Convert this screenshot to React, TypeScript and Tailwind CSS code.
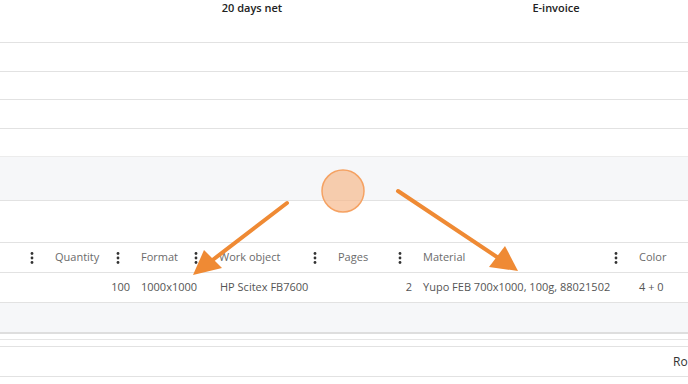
import React from "react";

const Kebab = () => (
  <svg width="4" height="14" viewBox="0 0 4 14" className="shrink-0">
    <circle cx="2" cy="2.5" r="1.4" fill="#333" />
    <circle cx="2" cy="7" r="1.4" fill="#333" />
    <circle cx="2" cy="11.5" r="1.4" fill="#333" />
  </svg>
);

const cols = [
  { w: 44, title: "" },
  { w: 86, title: "Quantity" },
  { w: 78, title: "Format" },
  { w: 119, title: "Work object" },
  { w: 85, title: "Pages" },
  { w: 216, title: "Material" },
  { w: 80, title: "Color" },
];

export default function App() {
  const font = { fontFamily: '"Open Sans", "Liberation Sans", sans-serif' };
  return (
    <div className="relative w-[688px] h-[384px] overflow-hidden bg-white text-[11px]" style={font}>
      {/* top header */}
      <div className="h-[43px] border-b border-[#e2e2e2] flex items-start">
        <div className="w-[150px]" />
        <div className="w-[204px] text-center font-semibold text-[#222] leading-none pt-[2px]">20 days net</div>
        <div className="w-[100px]" />
        <div className="w-[204px] text-center font-semibold text-[#222] leading-none pt-[2px]">E-invoice</div>
      </div>
      <div className="h-[29px] border-b border-[#e2e2e2]" />
      <div className="h-[28px] border-b border-[#e2e2e2]" />
      <div className="h-[29px] border-b border-[#e2e2e2]" />
      <div className="h-[28px] border-b border-[#ececec]" />
      <div className="h-[44px] border-b border-[#e2e2e2] bg-[#f6f7f9]" />
      <div className="h-[42px] border-b border-[#e2e2e2]" />
      {/* column header */}
      <div className="h-[30px] border-b border-[#e2e2e2] flex items-center text-[#6b6b6b]">
        {cols.map((c, i) => (
          <div key={i} className="h-full flex items-center pl-[11px] pr-[10px] shrink-0" style={{ width: c.w }}>
            <span className="flex-1 whitespace-nowrap">{c.title}</span>
            {i < cols.length - 1 && <Kebab />}
          </div>
        ))}
      </div>
      {/* data row */}
      <div className="h-[30px] border-b border-[#e2e2e2] flex items-center text-[#555]">
        <div className="w-[44px] shrink-0" />
        <div className="w-[86px] shrink-0 text-right">100</div>
        <div className="w-[78px] shrink-0 pl-[11px] whitespace-nowrap">1000x1000</div>
        <div className="w-[119px] shrink-0 pl-[12px] whitespace-nowrap">HP Scitex FB7600</div>
        <div className="w-[85px] shrink-0 text-right">2</div>
        <div className="w-[216px] shrink-0 pl-[11px] whitespace-nowrap">Yupo FEB 700x1000, 100g, 88021502</div>
        <div className="w-[80px] shrink-0 pl-[11px] whitespace-nowrap">4 + 0</div>
      </div>
      <div className="h-[31px] bg-[#f6f7f9] border-b-2 border-[#dedede]" />
      <div className="h-[6px] border-b border-[#e6e6e6]" />
      <div className="h-[7px] border-b border-[#e2e2e2]" />
      <div className="h-[30px] border-b border-[#e2e2e2] flex items-center text-[#333] text-[12px]">
        <span className="ml-[673px] whitespace-nowrap">Ro</span>
      </div>

      {/* annotation overlay */}
      <svg className="absolute inset-0 pointer-events-none" width="688" height="384" viewBox="0 0 688 384">
        <circle cx="343" cy="191" r="21" fill="#f7b98d" fillOpacity="0.7" stroke="#f5a263" strokeWidth="1.5" />
        <line x1="287" y1="203" x2="210" y2="262" stroke="#ef8a34" strokeWidth="4" strokeLinecap="round" />
        <polygon points="193,275 204,250 222,268" fill="#ef8a34" />
        <line x1="398" y1="191" x2="500" y2="259" stroke="#ef8a34" strokeWidth="4" strokeLinecap="round" />
        <polygon points="518,271 489,267 505,246" fill="#ef8a34" />
      </svg>
    </div>
  );
}
